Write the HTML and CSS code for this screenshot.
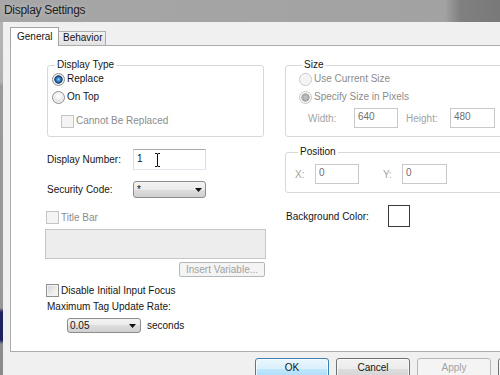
FILE: index.html
```html
<!DOCTYPE html>
<html>
<head>
<meta charset="utf-8">
<title>Display Settings</title>
<link rel="stylesheet" href="styles.css">
</head>
<body>
<div class="screen">
  <div class="titlebar"><span class="title">Display Settings</span></div>
  <div class="client">
    <div class="edge"></div>
    <div class="window">
      <div class="tabs">
        <div class="tab active">General</div>
        <div class="tab inactive">Behavior</div>
      </div>
      <div class="panel">
        <div class="col-left">
          <fieldset class="group dtype">
            <legend>Display Type</legend>
            <div class="opt"><span class="radio checked"></span>Replace</div>
            <div class="opt"><span class="radio"></span>On Top</div>
            <div class="opt sub dis"><span class="check disabled"></span>Cannot Be Replaced</div>
          </fieldset>
          <div class="frow num">
            <span class="lbl">Display Number:</span>
            <span class="textbox">1<svg class="ibeam" width="7" height="14" viewBox="0 0 7 14"><path d="M1 .5h2l.5.5.5-.5h2M3.5 1v12M1 13.5h2l.5-.5.5.5h2" stroke="#111" stroke-width="1" fill="none"/></svg></span>
          </div>
          <div class="frow sec">
            <span class="lbl">Security Code:</span>
            <span class="combo wide"><span class="val">*</span><svg class="arrow" width="7" height="4" viewBox="0 0 7 4"><path d="M0 0h7L3.5 4z" fill="#111"/></svg></span>
          </div>
          <div class="opt chk-row titlebar-row dis"><span class="check disabled"></span>Title Bar</div>
          <div class="textarea"></div>
          <div class="btn small disabled insert">Insert Variable...</div>
          <div class="opt chk-row focus-row"><span class="check"></span>Disable Initial Input Focus</div>
          <div class="maxlbl">Maximum Tag Update Rate:</div>
          <div class="frow rate">
            <span class="combo short"><span class="val">0.05</span><svg class="arrow" width="7" height="4" viewBox="0 0 7 4"><path d="M0 0h7L3.5 4z" fill="#111"/></svg></span>
            <span class="unit">seconds</span>
          </div>
        </div>
        <div class="col-right">
          <fieldset class="group size">
            <legend>Size</legend>
            <div class="opt dis"><span class="radio disabled"></span>Use Current Size</div>
            <div class="opt dis"><span class="radio disabled checked-dis"></span>Specify Size in Pixels</div>
            <div class="frow dims">
              <span class="dlbl w">Width:</span>
              <span class="textbox disabled w44">640</span>
              <span class="dlbl h">Height:</span>
              <span class="textbox disabled w45">480</span>
            </div>
          </fieldset>
          <fieldset class="group position">
            <legend>Position</legend>
            <div class="frow pos">
              <span class="dlbl x">X:</span>
              <span class="textbox disabled w44">0</span>
              <span class="dlbl y">Y:</span>
              <span class="textbox disabled w45">0</span>
            </div>
          </fieldset>
          <div class="frow bg">
            <span class="bglbl">Background Color:</span>
            <span class="swatch"></span>
          </div>
        </div>
      </div>
      <div class="footer">
        <div class="btn default">OK</div>
        <div class="btn">Cancel</div>
        <div class="btn disabled">Apply</div>
        <div class="btn"></div>
      </div>
    </div>
  </div>
</div>
</body>
</html>
```
FILE: styles.css
```css
* { box-sizing: border-box; }
html, body { margin: 0; padding: 0; }
body {
  width: 500px;
  height: 375px;
  overflow: hidden;
  background: #f0f0f0;
  font-family: "Liberation Sans", Arial, sans-serif;
  font-size: 10px;
  color: #151515;
}
.screen { display: flex; flex-direction: column; height: 375px; }

.titlebar {
  height: 22px;
  flex: none;
  display: flex;
  align-items: center;
  padding: 0 0 2px 4px;
  background: linear-gradient(90deg, #a6a6a6 0, #a2a2a2 89%, #808080 92%, #797979 100%);
}
.title {
  font-size: 12px;
  letter-spacing: -0.3px;
  color: #1c1c1c;
  text-shadow: 0 0 5px rgba(255,255,255,0.45);
}

.client { flex: 1; display: flex; min-height: 0; }
.edge {
  width: 3px;
  flex: none;
  background: linear-gradient(180deg, #b4b4b4 0, #b0b0b0 60px, #9a9a9a 64px, #979797 286px, #1f2362 290px, #1c205e 318px, #8d8d8d 322px, #8a8a8a 100%);
}
.window {
  flex: 1;
  min-width: 0;
  display: flex;
  flex-direction: column;
  padding-left: 7px;
}

/* tabs */
.tabs {
  height: 23px;
  flex: none;
  display: flex;
  align-items: flex-end;
}
.tab { line-height: 12px; color: #151515; }
.tab.active {
  width: 49px;
  height: 19px;
  margin-bottom: -1px;
  padding: 3px 0 0 6px;
  background: #fff;
  border: 1px solid #a3a3a3;
  border-bottom: none;
  position: relative;
  z-index: 1;
}
.tab.inactive {
  width: 47px;
  height: 14px;
  padding: 0 0 0 4px;
  border: 1px solid #adadad;
  border-left: none;
  border-bottom: none;
  background: linear-gradient(#f2f2f2, #e2e2e2);
}

/* panel */
.panel {
  width: 530px;
  height: 307px;
  flex: none;
  background: #fff;
  border: 1px solid #acacac;
  border-right: none;
  display: flex;
  gap: 19px;
  padding: 13px 0 0 35px;
}
.col-left { width: 220px; flex: none; display: flex; flex-direction: column; }
.col-right { width: 240px; flex: none; display: flex; flex-direction: column; }

.group {
  margin: 0;
  border: 1px solid #d8d8d8;
  border-radius: 3px;
  min-width: 0;
}
.group legend {
  padding: 0 2px;
  margin-left: 3px;
  line-height: 12px;
  font-size: 10px;
  color: #151515;
}
.dtype { margin-left: 1px; width: 217px; height: 78px; padding: 1px 0 0 4px; }
.size { width: 240px; height: 78px; padding: 1px 0 0 13px; }
.position { width: 240px; height: 47px; margin-top: 9px; padding: 6px 0 0 9px; }

.opt { display: flex; align-items: center; height: 14px; line-height: 12px; }
.opt + .opt { margin-top: 4px; }
.opt.sub { margin-top: 10px; padding-left: 9px; }
.dis { color: #8c8c8c; }

.radio {
  width: 13px;
  height: 13px;
  flex: none;
  margin-right: 2px;
  border-radius: 50%;
  border: 1px solid #8f9090;
  background: radial-gradient(circle at 50% 40%, #ffffff 0, #f1f1f1 3px, #d6d6d6 6px);
  box-shadow: inset 0 0 0 1px #f7f7f7;
}
.radio.checked {
  background: radial-gradient(circle at 50% 50%, #8fdcfa 0, #3a94d6 1.6px, #1b4f95 3.2px, #2a3f66 3.9px, #e9e9e9 4.6px, #d6d6d6 6px);
}
.radio.disabled {
  border-color: #c8c8c8;
  background: #f3f3f3;
  box-shadow: inset 0 0 0 1px #fbfbfb;
}
.radio.checked-dis {
  background: radial-gradient(circle at 50% 50%, #c9c9c9 0, #adadad 3px, #9b9b9b 3.8px, #f3f3f3 4.5px);
}

.check {
  width: 13px;
  height: 13px;
  flex: none;
  margin-right: 2px;
  border: 1px solid #8f8f8f;
  background: linear-gradient(135deg, #cfd2d6 0, #eeeeee 60%, #f8f8f8 100%);
  box-shadow: inset 0 0 0 1px #f4f4f4;
}
.check.disabled {
  border-color: #c4c4c4;
  background: #f4f4f4;
  box-shadow: none;
}

.frow { display: flex; align-items: center; }
.lbl { width: 86px; margin-left: 1px; flex: none; }
.num { margin-top: 12px; height: 21px; }
.sec { margin-top: 11px; height: 17px; }

.textbox {
  position: relative;
  height: 21px;
  width: 73px;
  flex: none;
  align-self: flex-start;
  padding: 3px 0 0 3px;
  line-height: 12px;
  background: #fff;
  border: 1px solid;
  border-color: #a9abb2 #d8dce3 #e3e9ef #d8dce3;
  color: #111;
}
.textbox.disabled {
  height: 20px;
  padding-top: 2px;
  color: #6f6f6f;
  border-color: #c9c9c9;
}
.w44 { width: 44px; }
.w45 { width: 45px; }
.ibeam { position: absolute; left: 20px; top: 3px; }

.combo {
  display: flex;
  align-items: center;
  justify-content: space-between;
  flex: none;
  border: 1px solid #8d8d8d;
  border-radius: 3px;
  background: linear-gradient(#f3f3f3 0, #ebebeb 50%, #dedede 50%, #d0d0d0 100%);
  line-height: 12px;
}
.combo.wide { width: 73px; height: 17px; padding: 0 3px 0 3px; }
.combo.wide .val { align-self: flex-start; padding-top: 2px; }
.combo.short { width: 74px; height: 15px; padding: 0 4px 0 2px; margin-left: 21px; }
.unit { margin-left: 6px; }
.arrow { flex: none; }

.chk-row { height: 13px; }
.titlebar-row { margin-top: 13px; }
.focus-row { margin-top: 7px; }
.textarea {
  margin-top: 5px;
  margin-left: -1px;
  width: 221px;
  height: 30px;
  border: 1px solid #c6c6c6;
  background: #ededed;
}

.btn {
  width: 74px;
  height: 23px;
  flex: none;
  border: 1px solid #707070;
  border-radius: 3px;
  text-align: center;
  padding-top: 3px;
  line-height: 12px;
  color: #151515;
  background: linear-gradient(#f2f2f2 0, #ebebeb 50%, #dddddd 50%, #cfcfcf 100%);
  box-shadow: inset 0 0 0 1px rgba(255,255,255,0.7);
}
.btn.default {
  border-color: #3c7fb1;
  background: linear-gradient(#eaf6fd 0, #d9f0fc 50%, #bee6fd 50%, #a7d9f5 100%);
}
.btn.disabled {
  border-color: #b4b8ba;
  background: #f4f4f4;
  color: #a2a2a2;
  box-shadow: none;
}
.btn.small {
  width: 86px;
  height: 15px;
  padding-top: 1px;
  border-radius: 2px;
}
.insert { margin-top: 3px; align-self: flex-end; margin-right: 1px; }

.maxlbl { margin-top: 4px; margin-left: 1px; line-height: 12px; }
.rate { margin-top: 5px; height: 15px; }

.dims { margin-top: 4px; height: 20px; padding-left: 9px; }
.dlbl { color: #a3a3a3; flex: none; }
.dlbl.w { width: 46px; }
.dlbl.h { width: 44px; margin-left: 8px; }
.pos { height: 20px; }
.dlbl.x { width: 20px; }
.dlbl.y { width: 19px; margin-left: 24px; }

.bg { margin-top: 12px; height: 22px; }
.bglbl { width: 102px; margin-left: 1px; flex: none; }
.swatch {
  width: 22px;
  height: 22px;
  flex: none;
  border: 1px solid #3a3a3a;
  background: #fff;
}

.footer {
  flex: none;
  display: flex;
  gap: 7px;
  padding: 6px 0 0 245px;
}
```
